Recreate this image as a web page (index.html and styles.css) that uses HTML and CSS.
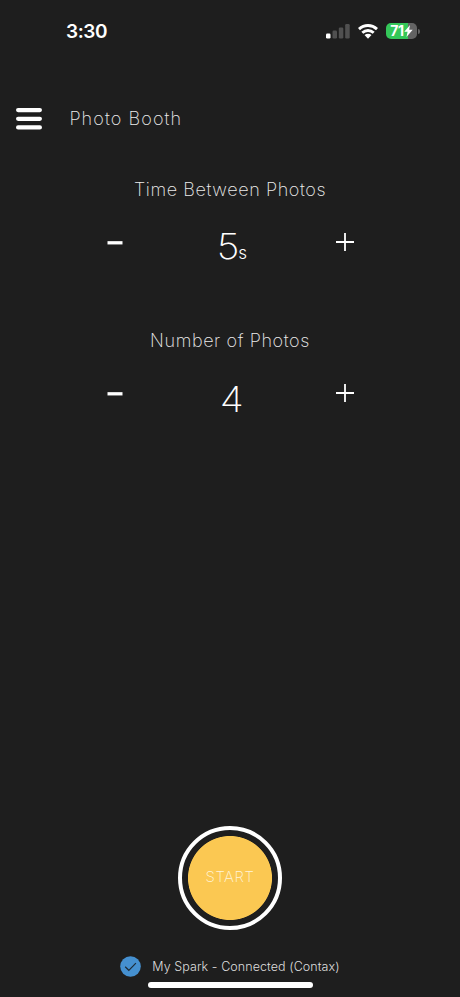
FILE: index.html
```html
<!DOCTYPE html>
<html lang="en">
<head>
<meta charset="utf-8">
<title>Photo Booth</title>
<link rel="stylesheet" href="styles.css">
</head>
<body>
<main class="screen">
  <div class="status-bar">
    <span class="clock">3:30</span>
    <div class="indicators">
      <svg class="signal" width="24" height="16" viewBox="0 0 24 16"><rect x="0" y="10.5" width="4.5" height="5" rx="1.2" fill="#fff"/><g fill="#505050"><rect x="6.5" y="7.5" width="4.5" height="8" rx="1.2"/><rect x="12.8" y="4.5" width="4.5" height="11" rx="1.2"/><rect x="19.2" y="1" width="4.5" height="14.5" rx="1.2"/></g></svg>
      <svg class="wifi" width="20" height="15" viewBox="0 0 20 15"><g fill="none" stroke="#fff" stroke-width="2.9"><path d="M1 5.1C6.2.3 13.8.3 19 5.1"/><path d="M4.3 8.7c3.3-3 8.1-3 11.4 0"/></g><path d="M6.5 11.1c2-1.8 5-1.8 7 0L10 14.8z" fill="#fff"/></svg>
      <div class="battery"><span>71</span><svg width="9" height="12" viewBox="0 0 9 12"><path d="M6 0L.3 6.7h3.3L2.5 12 8.7 4.8H5.2z" fill="#fff"/></svg></div>
      <span class="battery-cap"></span>
    </div>
  </div>

  <header class="header">
    <svg width="26" height="22" viewBox="0 0 26 22"><path d="M2.1 2.1h21.8M2.1 10.8h21.8M2.1 19.4h21.8" stroke="#fff" stroke-width="4.2" stroke-linecap="round"/></svg>
    <h1 class="title">Photo Booth</h1>
  </header>

  <section class="setting">
    <h2 class="label label-time">Time Between Photos</h2>
    <div class="stepper">
      <svg class="minus" width="18" height="18" viewBox="0 0 18 18"><path d="M1.5 9.8h15" stroke="#fff" stroke-width="3.3"/></svg>
      <div class="value value-time"><span class="digit">5</span><small>s</small></div>
      <svg class="plus" width="18" height="18" viewBox="0 0 18 18"><path d="M0 9h18M9 0v18" stroke="#fff" stroke-width="1.8"/></svg>
    </div>
  </section>

  <section class="setting setting-count">
    <h2 class="label label-count">Number of Photos</h2>
    <div class="stepper">
      <svg class="minus" width="18" height="18" viewBox="0 0 18 18"><path d="M1.5 9.8h15" stroke="#fff" stroke-width="3.3"/></svg>
      <div class="value value-count"><span class="digit">4</span></div>
      <svg class="plus" width="18" height="18" viewBox="0 0 18 18"><path d="M0 9h18M9 0v18" stroke="#fff" stroke-width="1.8"/></svg>
    </div>
  </section>

  <footer class="footer">
    <button class="shutter"><span class="start">START</span></button>
    <div class="connection">
      <svg width="21" height="21" viewBox="0 0 21 21"><circle cx="10.5" cy="10.5" r="10.3" fill="#4590d0"/><path d="M5.2 10.8l3.6 3.5 7.1-7.1" fill="none" stroke="#1e2b36" stroke-width="1.2"/></svg>
      <span class="device">My Spark - Connected (Contax)</span>
    </div>
    <div class="home-bar"></div>
  </footer>
</main>
</body>
</html>
```
FILE: styles.css
```css
* { box-sizing: border-box; }
body { margin: 0; background: #1e1e1e; color: #fff; font-family: Inter, sans-serif; font-weight: 300; }
svg { display: block; flex: none; }
h1, h2 { margin: 0; font-weight: 250; color: #ececec; }
.screen { width: 460px; height: 997px; display: flex; flex-direction: column; overflow: hidden; }
.status-bar { height: 62px; padding: 0 40px 0 66px; display: flex; align-items: center; justify-content: space-between; }
.clock { font: 600 19px/24px Inter, sans-serif; letter-spacing: -0.4px; padding-top: 2px; }
.indicators { display: flex; align-items: center; }
.wifi { margin: 0 8px; }
.battery { width: 31px; height: 16px; border-radius: 5px; background: linear-gradient(90deg, #34c759 71%, #636363 71%); display: flex; align-items: center; justify-content: center; font: 700 14px/16px Inter, sans-serif; letter-spacing: -0.3px; }
.battery-cap { width: 2px; height: 5px; margin-left: 1px; border-radius: 0 2px 2px 0; background: #636363; }
.header { height: 112px; padding: 1px 16px 0; display: flex; align-items: center; gap: 27px; }
.header svg { margin-left: 0.4px; }
.title { font-size: 18px; line-height: 24px; letter-spacing: 1.1px; }
.setting { height: 151px; display: flex; flex-direction: column; align-items: center; padding-top: 4px; }
.label { font-size: 18px; line-height: 24px; letter-spacing: 0.6px; white-space: nowrap; }
.stepper { width: 248px; height: 62px; margin-top: 21px; display: grid; grid-template-columns: 18px 1fr 18px; justify-items: center; align-items: start; }
.minus, .plus { margin: 10px 1px 0 0; }
.value { font-size: 35px; line-height: 44px; font-weight: 250; }
.value small { font-size: 17px; font-weight: 300; }
.digit { display: inline-block; transform: scaleX(1.12); }
.value-time { padding: 1px 0 0 5px; }
.value-count { padding: 3px 0 0 4px; }
.footer { margin-top: auto; height: 171px; display: flex; flex-direction: column; align-items: center; }
.shutter { width: 104px; height: 104px; padding: 0 0 2px; border: 4px solid #fff; border-radius: 50%; background: radial-gradient(circle, #fbc852 41.6px, transparent 42.4px) center / 96px 96px no-repeat padding-box; color: #fff4da; font: 250 15px/20px Inter, sans-serif; letter-spacing: 0.6px; display: flex; align-items: center; justify-content: center; }
.connection { display: flex; align-items: center; gap: 11px; margin-top: 26px; height: 21px; }
.device { font-size: 12.5px; line-height: 18px; padding-top: 1px; letter-spacing: 0.07px; color: #ddd; white-space: nowrap; }
.home-bar { width: 165px; height: 6px; margin-top: 5px; border-radius: 3px; background: #fff; }
```
